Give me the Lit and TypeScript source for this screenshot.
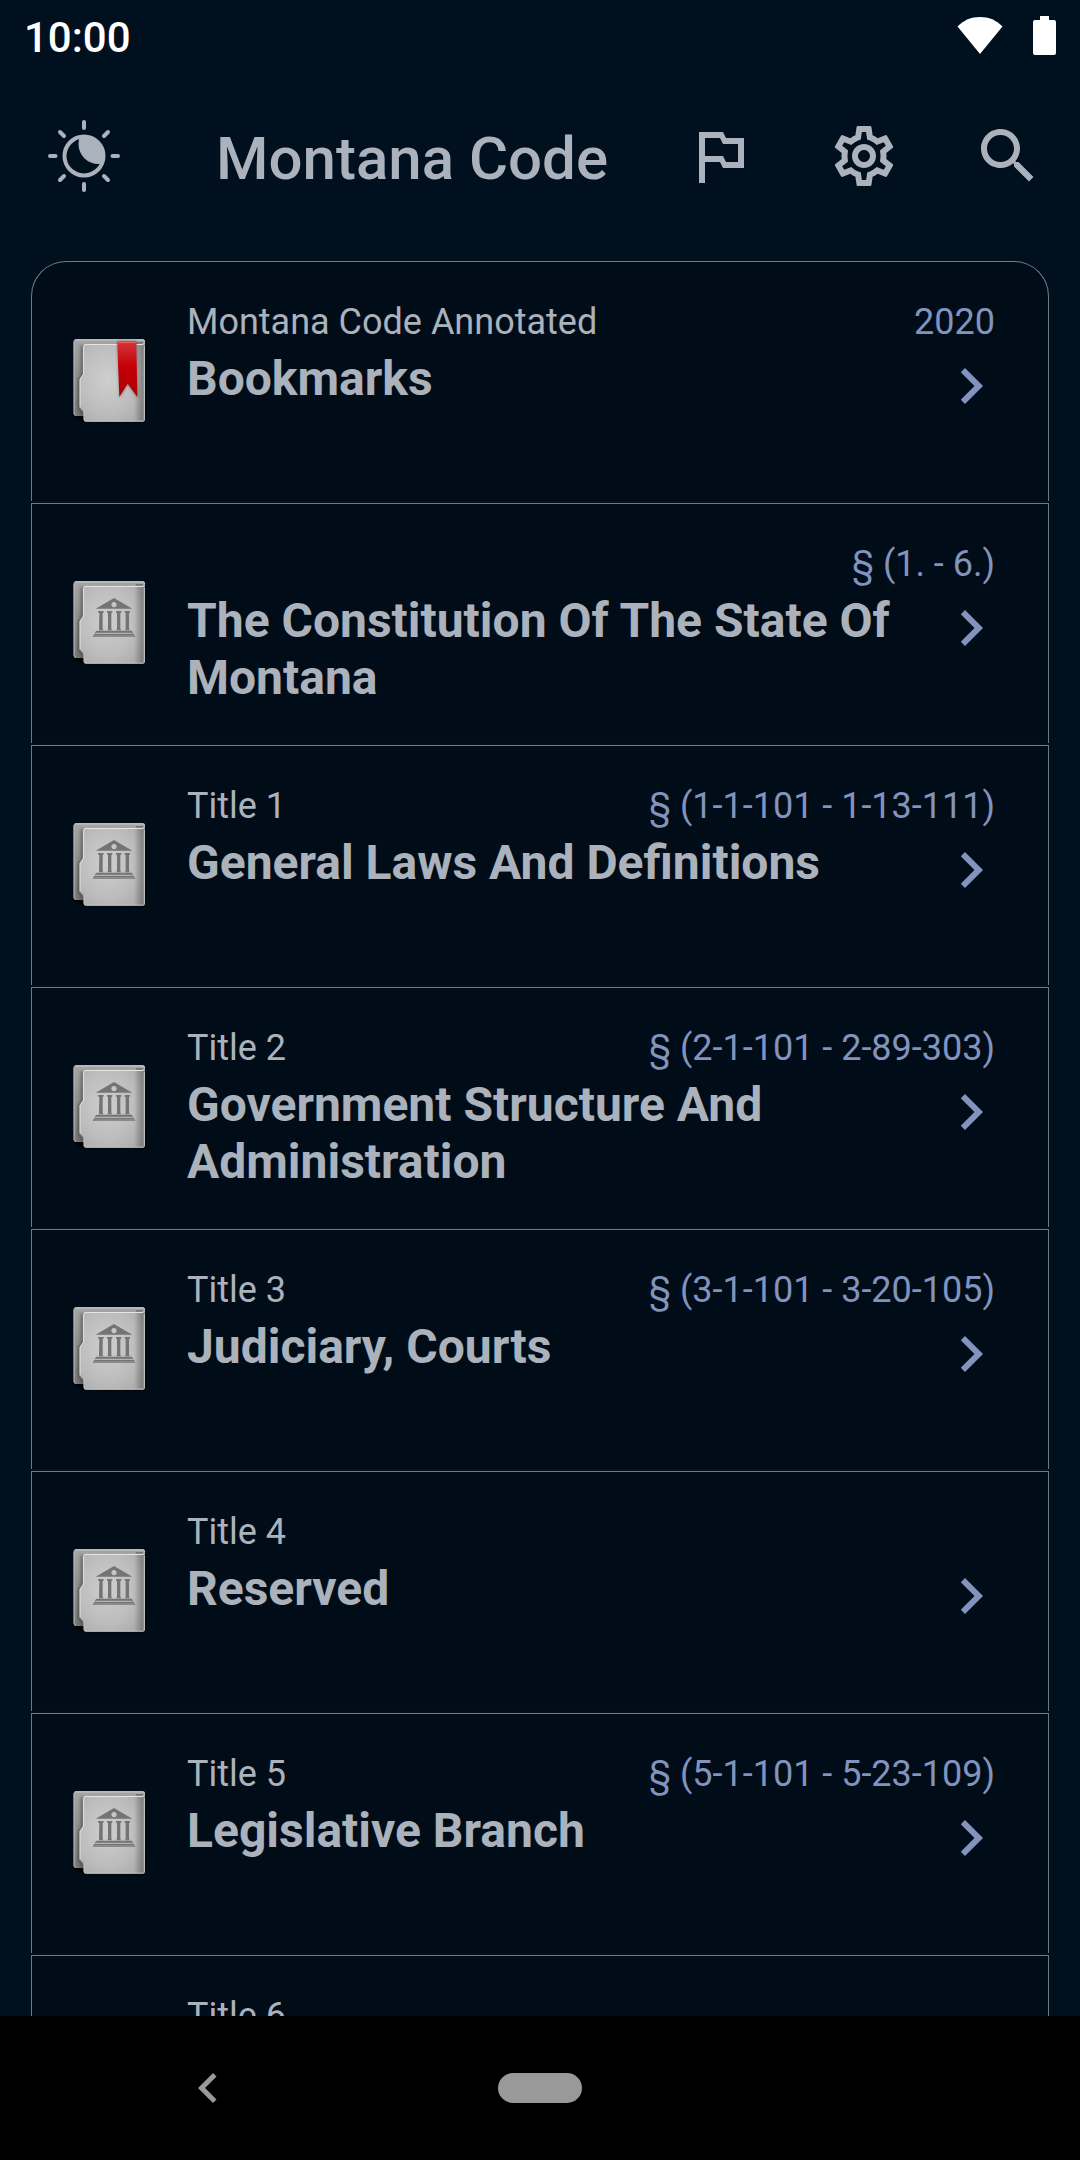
import { LitElement, html, css, svg } from "lit";
import { customElement, property } from "lit/decorators.js";

interface Entry {
  label: string;
  range: string;
  title: string;
  kind: "bookmark" | "title";
}

const ENTRIES: Entry[] = [
  { label: "Montana Code Annotated", range: "2020", title: "Bookmarks", kind: "bookmark" },
  { label: "", range: "§ (1. - 6.)", title: "The Constitution Of The State Of Montana", kind: "title" },
  { label: "Title 1", range: "§ (1-1-101 - 1-13-111)", title: "General Laws And Definitions", kind: "title" },
  { label: "Title 2", range: "§ (2-1-101 - 2-89-303)", title: "Government Structure And Administration", kind: "title" },
  { label: "Title 3", range: "§ (3-1-101 - 3-20-105)", title: "Judiciary, Courts", kind: "title" },
  { label: "Title 4", range: "", title: "Reserved", kind: "title" },
  { label: "Title 5", range: "§ (5-1-101 - 5-23-109)", title: "Legislative Branch", kind: "title" },
  { label: "Title 6", range: "", title: "", kind: "title" },
];

@customElement("folder-icon")
export class FolderIcon extends LitElement {
  @property() kind = "title";

  static styles = css`
    :host { display: block; width: 100px; height: 120px; }
    .art { display: block; width: 100%; height: 100%; }
  `;

  private ribbon() {
    return svg`
      <path d="M172 67 Q172 64 176 64 H224 Q229 64 229 68 L232 233 L203 193 L179 233 Z" fill="#000" opacity=".35" filter="url(#soft)"/>
      <path d="M172 68 Q172 64 176 64 H224 Q229 64 229 68 L232 231 L203 191 L178 231 Z" fill="url(#red)"/>
      <path d="M173 67 H228" stroke="#ee5a5e" stroke-width="4"/>`;
  }

  private temple() {
    return svg`
      <g fill="#747474">
        <path fill-rule="evenodd" d="M162 108 L217 140 H107 Z M162 120 a8 8 0 1 0 .1 0 Z"/>
        <path d="M114 147 h17 v4 l-3 3 v47 l3 4 h-14 v-4 l1 -47 l-4 -3 Z"/>
        <path d="M141 147 h16 v4 l-3 3 v47 l3 4 h-15 l2 -4 v-47 l-3 -3 Z"/>
        <path d="M168 147 h16 v4 l-3 3 v47 l3 4 h-16 l3 -4 v-47 l-3 -3 Z"/>
        <path d="M194 147 h16 v4 l-3 3 v47 l3 4 h-15 l2 -4 v-47 l-3 -3 Z"/>
        <path d="M109 206 H215 L220 213 H104 Z"/>
        <path d="M103 215 H221 L226 225 H98 Z"/>
      </g>
      <path d="M108 213.500 H217 M101 222 H223" stroke="#b9b9b9" stroke-width="2"/>`;
  }

  render() {
    return html`<svg class="art" viewBox="0 0 300 360" aria-hidden="true">
      <defs>
        <radialGradient id="face" cx=".42" cy=".45" r=".75">
          <stop offset="0" stop-color="#cfcfcf"/><stop offset=".6" stop-color="#bcbcbc"/><stop offset="1" stop-color="#a8a8a8"/>
        </radialGradient>
        <linearGradient id="back" x1="0" x2="0" y1="0" y2="1">
          <stop offset="0" stop-color="#a5a5a5"/><stop offset="1" stop-color="#777"/>
        </linearGradient>
        <linearGradient id="spine" x1="0" x2="1" y1="0" y2="0">
          <stop offset="0" stop-color="#555" stop-opacity="0"/><stop offset=".75" stop-color="#555" stop-opacity=".5"/><stop offset="1" stop-color="#777" stop-opacity=".3"/>
        </linearGradient>
        <linearGradient id="red" x1="0" x2="0" y1="0" y2="1">
          <stop offset="0" stop-color="#d8353b"/><stop offset=".2" stop-color="#cb1f26"/><stop offset=".45" stop-color="#c40007"/><stop offset="1" stop-color="#ad0004"/>
        </linearGradient>
        <filter id="soft" x="-20%" y="-20%" width="140%" height="140%"><feGaussianBlur stdDeviation="4"/></filter>
      </defs>
      <path d="M42 250 H255 V306 H74 L42 292 Z" fill="#000" opacity=".8" filter="url(#soft)"/>
      <path d="M47 58 H249 Q255 58 255 64 V280 H47 Q41 280 41 282 V64 Q41 58 47 58 Z" fill="url(#back)"/>
      <path d="M41 64 V282 Q41 288 47 288 H80 V64 Z" fill="url(#back)"/>
      <path d="M46 59.500 H249 Q253 60 254 65" fill="none" stroke="#d6d6d6" stroke-width="3"/>
      <path d="M42.500 64 V281 Q43 286 48 286" fill="none" stroke="#b5b5b5" stroke-width="3"/>
      <path d="M66 76 V166 L56 180 V260 L68 284 V292" fill="none" stroke="#222" stroke-width="8" opacity=".5" filter="url(#soft)"/>
      <path d="M78 72 H246 Q255 72 255 78 V298 Q255 305 249 305 H78 Q71 305 71 299 V274 L60 262 V178 L71 162 V79 Q71 72 78 72 Z" fill="url(#face)"/>
      <path d="M222 73 H255 V304 H222 Z" fill="url(#spine)"/>
      <path d="M228 66 H248 L252 71 H228 Z" fill="#777"/>
      <path d="M60 262 V178 L71 162 V79 Q71 73.500 78 73.500 H246 Q252 73 253 69" fill="none" stroke="#e6e6e6" stroke-width="3"/>
      <path d="M60 262 L72 275 V298 Q72 303.500 79 303.500 H248 Q253.500 303 253.500 298 V78" fill="none" stroke="#d0d0d0" stroke-width="2"/>
      ${this.kind === "bookmark" ? this.ribbon() : this.temple()}
    </svg>`;
  }
}

@customElement("code-row")
export class CodeRow extends LitElement {
  @property({ attribute: false }) entry!: Entry;

  static styles = css`
    :host { display: block; }
    .row {
      display: grid;
      grid-template-columns: 100px minmax(0, 1fr);
      column-gap: 27px;
      box-sizing: border-box;
      min-height: 240px;
      padding: 39px 41px 0 28px;
      border: 1px solid #6f7b80;
      border-bottom: none;
      background: #000d18;
      color: #abb2bb;
      text-decoration: none;
    }
    :host(:first-child) .row { border-radius: 35px 35px 0 0; }
    .icon { margin-top: 19px; }
    .top {
      display: flex;
      justify-content: space-between;
      gap: 24px;
      min-height: 42px;
      padding-right: 12px;
      font-size: 36px;
      line-height: 42px;
    }
    .range { margin-left: auto; color: #8293be; }
    .main { display: flex; align-items: flex-start; margin-top: 7px; }
    .title {
      flex: 1;
      min-width: 0;
      margin: 0;
      font-size: 48px;
      line-height: 57px;
      font-weight: 700;
    }
    .chevron { flex: none; width: 72px; height: 72px; fill: #8293be; }
  `;

  render() {
    const { label, range, title, kind } = this.entry;
    return html`<a class="row" href="#">
      <folder-icon class="icon" kind=${kind}></folder-icon>
      <div>
        <div class="top"><span>${label}</span><span class="range">${range}</span></div>
        <div class="main">
          <h2 class="title">${title}</h2>
          <svg class="chevron" viewBox="0 0 24 24" aria-hidden="true"><path d="M10 6 8.590 7.410 13.170 12l-4.580 4.590L10 18l6-6z"/></svg>
        </div>
      </div>
    </a>`;
  }
}

@customElement("app-root")
export class AppRoot extends LitElement {
  static styles = css`
    :host {
      display: flex;
      flex-direction: column;
      height: 100vh;
      overflow: hidden;
      background: #00101e;
      color: #abb2bb;
      font-family: Roboto, "Liberation Sans", sans-serif;
    }
    .status {
      display: flex;
      align-items: center;
      flex: none;
      height: 72px;
      padding: 0 24px;
      color: #fff;
      fill: #fff;
    }
    .clock { flex: 1; padding-top: 4px; font-size: 42px; line-height: 50px; font-weight: 500; }
    .wifi { width: 46px; height: 40px; margin-right: 30px; }
    .battery { width: 23px; height: 40px; }
    .bar {
      display: flex;
      align-items: center;
      flex: none;
      height: 168px;
      padding: 0 36px 0 48px;
    }
    .heading { flex: 1; margin: 0 0 0 96px; padding-top: 5px; font-size: 60px; line-height: 70px; font-weight: 500; }
    .actions { display: flex; gap: 72px; }
    button { display: block; padding: 0; border: 0; background: none; color: inherit; }
    .icon { display: block; width: 72px; height: 72px; fill: currentColor; }
    .list {
      display: flex;
      flex-direction: column;
      gap: 2px;
      flex: 1;
      min-height: 0;
      overflow: hidden;
      padding: 21px 31px 0;
    }
    .item { flex: none; }
    .nav {
      display: grid;
      grid-template-columns: 1fr auto 1fr;
      align-items: center;
      flex: none;
      height: 144px;
      background: #000;
      color: #999;
    }
    .back { justify-self: start; margin-left: 178px; }
    .arrow { display: block; width: 60px; height: 60px; fill: currentColor; }
    .home { width: 84px; height: 30px; border-radius: 15px; background: #999; }
  `;

  render() {
    return html`
      <div class="status">
        <span class="clock">10:00</span>
        <svg class="wifi" viewBox="0 0 46 40" aria-hidden="true"><path d="M23 38 .5 10.500C7 4 14 1 23 1s16 3 22.500 9.500z"/></svg>
        <svg class="battery" viewBox="0 0 23 40" aria-hidden="true"><path d="M7 0h9v4h5q2 0 2 2v31q0 2-2 2H2q-2 0-2-2V6q0-2 2-2h5z"/></svg>
      </div>
      <header class="bar">
        <button aria-label="Toggle day and night">
          <svg class="icon" viewBox="0 0 72 72">
            <clipPath id="disc"><circle cx="36" cy="36" r="20"/></clipPath>
            <circle cx="36" cy="36" r="19.500" fill="none" stroke="currentColor" stroke-width="4"/>
            <circle cx="50.500" cy="24" r="20" clip-path="url(#disc)"/>
            <path d="M36 2v6M36 64v6M2 36h5.500M64.500 36H70M12 12l4 4M56 56l4 4M12 60l4-4M56 16l4-4" fill="none" stroke="currentColor" stroke-width="4" stroke-linecap="round"/>
          </svg>
        </button>
        <h1 class="heading">Montana Code</h1>
        <div class="actions">
          <button aria-label="Flag">
            <svg class="icon" viewBox="0 0 24 24"><path d="M14 6l-1-2H5v17h2v-7h5l1 2h7V6h-6zm4 8h-4l-1-2H7V6h5l1 2h5v6z"/></svg>
          </button>
          <button aria-label="Settings">
            <svg class="icon" viewBox="0 0 24 24"><path d="M19.430 12.980c.04-.32.07-.64.07-.98 0-.34-.03-.66-.07-.98l2.110-1.650c.19-.15.24-.42.12-.64l-2-3.460c-.09-.16-.26-.25-.44-.25-.06 0-.12.01-.17.03l-2.490 1c-.52-.4-1.080-.73-1.690-.98l-.38-2.650C14.460 2.180 14.250 2 14 2h-4c-.25 0-.46.18-.49.42l-.38 2.650c-.61.25-1.170.59-1.690.98l-2.490-1c-.06-.02-.12-.03-.18-.03-.17 0-.34.09-.43.25l-2 3.460c-.13.22-.07.49.12.64l2.110 1.650c-.04.32-.07.65-.07.98 0 .33.03.66.07.98l-2.110 1.650c-.19.15-.24.42-.12.64l2 3.460c.09.16.26.25.44.25.06 0 .12-.01.17-.03l2.490-1c.52.4 1.080.73 1.690.98l.38 2.650c.03.24.24.42.49.42h4c.25 0 .46-.18.49-.42l.38-2.650c.61-.25 1.170-.59 1.690-.98l2.490 1c.06.02.12.03.18.03.17 0 .34-.09.43-.25l2-3.460c.12-.22.07-.49-.12-.64l-2.110-1.650zm-1.980-1.710c.04.31.05.52.05.73 0 .21-.02.43-.05.73l-.14 1.130.89.7 1.080.84-.7 1.210-1.270-.51-1.040-.42-.9.68c-.43.32-.84.56-1.250.73l-1.060.43-.16 1.130-.2 1.350h-1.400l-.19-1.350-.16-1.130-1.060-.43c-.43-.18-.83-.41-1.230-.71l-.91-.7-1.060.43-1.270.51-.7-1.210 1.080-.84.89-.7-.14-1.130c-.03-.31-.05-.54-.05-.74s.02-.43.05-.73l.14-1.130-.89-.7-1.080-.84.7-1.210 1.270.51 1.040.42.9-.68c.43-.32.84-.56 1.250-.73l1.060-.43.16-1.130.2-1.350h1.390l.19 1.350.16 1.130 1.060.43c.43.18.83.41 1.230.71l.91.7 1.060-.43 1.270-.51.7 1.210-1.070.85-.89.7.14 1.130zM12 8c-2.210 0-4 1.790-4 4s1.790 4 4 4 4-1.790 4-4-1.790-4-4-4zm0 6c-1.100 0-2-.9-2-2s.9-2 2-2 2 .9 2 2-.9 2-2 2z"/></svg>
          </button>
          <button aria-label="Search">
            <svg class="icon" viewBox="0 0 24 24"><path d="M15.500 14h-.79l-.28-.27C15.410 12.590 16 11.110 16 9.500 16 5.910 13.090 3 9.500 3S3 5.910 3 9.500 5.910 16 9.500 16c1.610 0 3.090-.59 4.230-1.570l.27.28v.79l5 4.990L20.490 19l-4.990-5zm-6 0C7.010 14 5 11.990 5 9.500S7.010 5 9.500 5 14 7.010 14 9.500 11.990 14 9.500 14z"/></svg>
          </button>
        </div>
      </header>
      <main class="list">
        ${ENTRIES.map((entry) => html`<code-row class="item" .entry=${entry}></code-row>`)}
      </main>
      <nav class="nav">
        <button class="back" aria-label="Back">
          <svg class="arrow" viewBox="0 0 24 24"><path d="M15.410 7.410 14 6l-6 6 6 6 1.410-1.410L10.830 12z"/></svg>
        </button>
        <button class="home" aria-label="Home"></button>
      </nav>
    `;
  }
}
